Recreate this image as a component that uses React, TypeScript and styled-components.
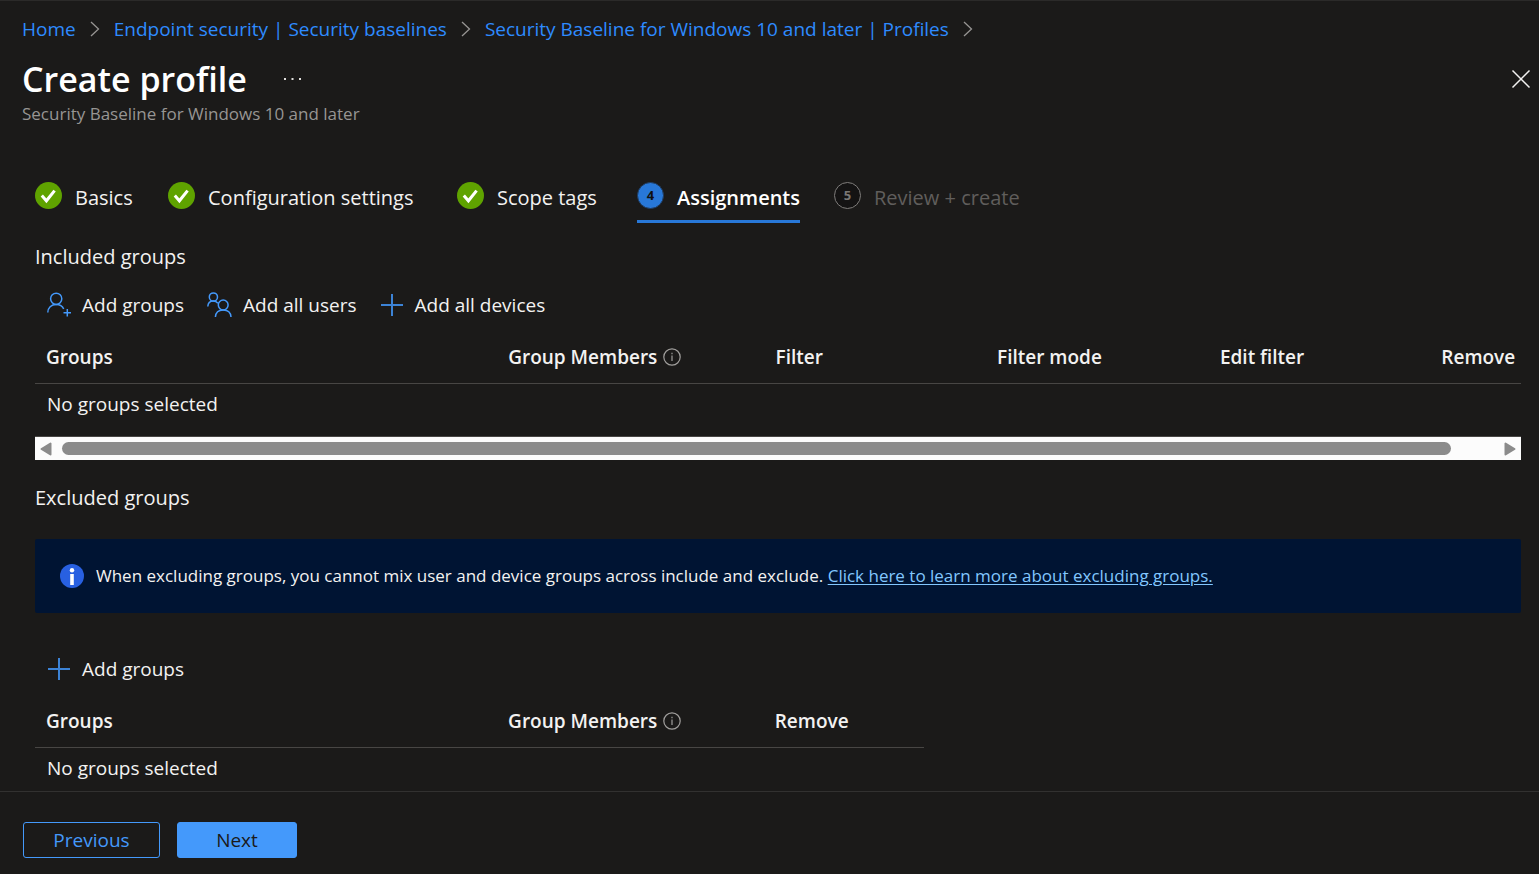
import React from "react";
import styled, { createGlobalStyle } from "styled-components";

const GlobalStyle = createGlobalStyle`
  *, *::before, *::after { box-sizing: border-box; }
  body {
    margin: 0;
    background: #1b1a19;
    color: #f3f2f1;
    font-family: "Open Sans", "Noto Sans", sans-serif;
    font-size: 19px;
    line-height: 28px;
  }
  button { font: inherit; color: inherit; background: none; border: 0; padding: 0; cursor: pointer; }
  h1, h2, p, ol { margin: 0; padding: 0; }
  svg { display: block; flex: none; }
`;

const Page = styled.div`
  min-height: 100vh;
  display: flex;
  flex-direction: column;
  border-top: 1px solid #2b2a29;
`;

const Header = styled.header`
  padding: 14px 8px 0 22px;
`;

const Breadcrumb = styled.nav`
  display: flex;
  align-items: center;
  gap: 14px;
  white-space: nowrap;
`;

const Crumb = styled.a`
  color: #2e8bff;
  text-decoration: none;
`;

const TitleRow = styled.div`
  display: flex;
  align-items: center;
  height: 44px;
  margin-top: 14px;
`;

const Title = styled.h1`
  color: #ffffff;
  font-size: 34px;
  line-height: 44px;
  font-weight: 600;
`;

const MoreButton = styled.button`
  margin-left: 37px;
`;

const CloseButton = styled.button`
  margin-left: auto;
`;

const Subtitle = styled.p`
  color: #979593;
  font-size: 17px;
  line-height: 26px;
`;

const Main = styled.main`
  padding: 55px 18px 0 35px;
`;

const Steps = styled.ol`
  display: grid;
  grid-template-columns: 133px 289px 180px 197px auto;
  list-style: none;
  justify-content: start;
  white-space: nowrap;
`;

const StepButton = styled.button<{ $state: "done" | "current" | "pending" }>`
  display: flex;
  align-items: flex-start;
  gap: 13px;
  height: 41px;
  border-bottom: 3px solid ${(p) => (p.$state === "current" ? "#2878d8" : "transparent")};
  color: ${(p) => (p.$state === "current" ? "#ffffff" : p.$state === "pending" ? "#605e5c" : "#f3f2f1")};
  font-size: 20px;
  font-weight: ${(p) => (p.$state === "current" ? 600 : 400)};
  line-height: 32px;
`;

const StepNumber = styled.span<{ $current?: boolean }>`
  width: 27px;
  height: 27px;
  border-radius: 50%;
  border: 1px solid ${(p) => (p.$current ? "#1f3b5e" : "#7f7d7b")};
  background: ${(p) => (p.$current ? "#2878d8" : "#141313")};
  color: ${(p) => (p.$current ? "#11100f" : "#797775")};
  font-size: 13px;
  font-weight: 700;
  line-height: 25px;
  text-align: center;
`;

const SectionTitle = styled.h2`
  font-size: 20px;
  font-weight: 400;
  line-height: 28px;
`;

const IncludedSection = styled.section`
  margin-top: 20px;
`;

const ExcludedSection = styled.section`
  margin-top: 24px;
`;

const Toolbar = styled.div`
  display: flex;
  gap: 23px;
  padding-left: 12px;
  margin: 18px 0 10px;
`;

const ToolButton = styled.button`
  display: flex;
  align-items: center;
  gap: 11px;
  height: 32px;
`;

const Table = styled.table<{ $width: string }>`
  width: ${(p) => p.$width};
  table-layout: fixed;
  border-collapse: separate;
  border-spacing: 0;
  white-space: nowrap;
`;

const HeadCell = styled.th<{ $width: string }>`
  width: ${(p) => p.$width};
  height: 53px;
  padding: 0 0 0 11px;
  border-bottom: 1px solid #484644;
  text-align: left;
  font-weight: 600;
`;

const HeadLabel = styled.span`
  display: flex;
  align-items: center;
  gap: 6px;
`;

const Cell = styled.td`
  height: 40px;
  padding: 0 0 0 12px;
`;

const ScrollTrack = styled.div`
  display: flex;
  align-items: center;
  justify-content: space-between;
  height: 24px;
  margin-top: 12px;
  padding: 0 5px;
  border-top: 1px solid #484644;
  background: #fcfcfc;
`;

const ScrollRail = styled.div`
  flex: 1;
  margin: 0 10px;
`;

const ScrollThumb = styled.div`
  width: 97%;
  height: 13px;
  border-radius: 7px;
  background: #8b8b8b;
`;

const InfoBox = styled.div`
  display: flex;
  align-items: center;
  gap: 12px;
  height: 74px;
  margin: 27px 0 40px;
  padding: 0 25px;
  border-radius: 2px;
  background: #001433;
  color: #f3f2f1;
  font-size: 17px;
`;

const InfoLink = styled.a`
  color: #82c7ff;
  text-underline-offset: 2px;
`;

const Footer = styled.footer`
  display: flex;
  gap: 17px;
  margin-top: auto;
  padding: 30px 23px 16px;
  border-top: 1px solid #323130;
`;

const ActionButton = styled.button<{ $primary?: boolean }>`
  width: ${(p) => (p.$primary ? 120 : 137)}px;
  height: 36px;
  border: 1px solid #4499fb;
  border-radius: 3px;
  background: ${(p) => (p.$primary ? "#4499fb" : "transparent")};
  color: ${(p) => (p.$primary ? "#1b1a19" : "#4499fb")};
  font-weight: 500;
  line-height: 32px;
`;

const Chevron = () => (
  <svg width="10" height="16" viewBox="0 0 10 16" fill="none" stroke="#979593" strokeWidth="1.3" aria-hidden="true">
    <path d="M1 1l7.5 7L1 15" />
  </svg>
);

const CheckIcon = () => (
  <svg width="27" height="27" viewBox="0 0 27 27" aria-hidden="true">
    <circle cx="13.5" cy="13.5" r="13.5" fill="#5fa300" />
    <path d="M6.8 13.6l4.6 5.2L19.6 8.6" fill="none" stroke="#fff" strokeWidth="3" />
  </svg>
);

const AddUserIcon = () => (
  <svg width="24" height="26" viewBox="0 0 24 26" fill="none" stroke="#4499fb" strokeWidth="1.5" aria-hidden="true">
    <circle cx="9.2" cy="6.8" r="5.6" />
    <path d="M.8 20.5c0-4.800 3.400-8 8.400-8 3.800 0 6.300 1.700 7.500 4.500" />
    <path d="M20.300 17v7.500M16.500 20.800H24" />
  </svg>
);

const UsersIcon = () => (
  <svg width="25" height="26" viewBox="0 0 25 26" fill="none" stroke="#4499fb" strokeWidth="1.5" aria-hidden="true">
    <circle cx="6.400" cy="5" r="4.100" />
    <path d="M.8 14.500c.2-3.400 2.300-5.400 5.400-5.400 2 0 3.600.8 4.700 2.100" />
    <circle cx="16.200" cy="13" r="4.900" />
    <path d="M8.400 25c.3-4.500 3.400-7.100 7.800-7.100s7.500 2.600 7.800 7.100" />
  </svg>
);

const PlusIcon = () => (
  <svg width="24" height="24" viewBox="0 0 24 24" fill="none" stroke="#3c83d6" strokeWidth="2" aria-hidden="true">
    <path d="M12 1v22M1 12h22" />
  </svg>
);

const HintIcon = () => (
  <svg width="18" height="18" viewBox="0 0 18 18" fill="none" stroke="#a19f9d" strokeWidth="1.200" aria-hidden="true">
    <circle cx="9" cy="9" r="8.200" />
    <path d="M9 7.500v5.500M9 4.800v1.400" />
  </svg>
);

const InfoIcon = () => (
  <svg width="24" height="24" viewBox="0 0 24 24" aria-hidden="true">
    <circle cx="12" cy="12" r="12" fill="#2860e1" />
    <circle cx="12" cy="6.200" r="2.200" fill="#fff" />
    <path d="M10.200 10h3.600v11h-3.600z" fill="#fff" />
  </svg>
);

const MoreIcon = () => (
  <svg width="17" height="4" viewBox="0 0 17 4" fill="#e1dfdd" aria-hidden="true">
    <path d="M0 1h2v2H0zM7.500 1h2v2h-2zM15 1h2v2h-2z" />
  </svg>
);

const CloseIcon = () => (
  <svg width="20" height="20" viewBox="0 0 20 20" stroke="#f3f2f1" strokeWidth="1.500" aria-hidden="true">
    <path d="M1.500 1.500l17 17M18.500 1.500l-17 17" />
  </svg>
);

const ArrowIcon = ({ right = false }: { right?: boolean }) => (
  <svg width="12" height="14" viewBox="0 0 12 14" fill="#8b8b8b" stroke="#8b8b8b" strokeWidth="2" strokeLinejoin="round" aria-hidden="true">
    <path d={right ? "M1.500 1.500v11L10.500 7z" : "M10.500 1.500v11L1.500 7z"} />
  </svg>
);

const crumbs = [
  "Home",
  "Endpoint security | Security baselines",
  "Security Baseline for Windows 10 and later | Profiles",
];

const steps = [
  { label: "Basics", state: "done" },
  { label: "Configuration settings", state: "done" },
  { label: "Scope tags", state: "done" },
  { label: "Assignments", state: "current" },
  { label: "Review + create", state: "pending" },
] as const;

type Column = { label: string; width: string; hint?: boolean };

const includedColumns: Column[] = [
  { label: "Groups", width: "31.1%" },
  { label: "Group Members", width: "18%", hint: true },
  { label: "Filter", width: "14.9%" },
  { label: "Filter mode", width: "15%" },
  { label: "Edit filter", width: "14.9%" },
  { label: "Remove", width: "6.1%" },
];

const excludedColumns: Column[] = [
  { label: "Groups", width: "52%" },
  { label: "Group Members", width: "30%", hint: true },
  { label: "Remove", width: "18%" },
];

const GroupsTable = ({ columns, width }: { columns: Column[]; width: string }) => (
  <Table $width={width}>
    <thead>
      <tr>
        {columns.map((c) => (
          <HeadCell key={c.label} $width={c.width} scope="col">
            <HeadLabel>
              {c.label}
              {c.hint && <HintIcon />}
            </HeadLabel>
          </HeadCell>
        ))}
      </tr>
    </thead>
    <tbody>
      <tr>
        <Cell colSpan={columns.length}>No groups selected</Cell>
      </tr>
    </tbody>
  </Table>
);

export default function App() {
  return (
    <Page>
      <GlobalStyle />
      <Header>
        <Breadcrumb aria-label="Breadcrumb">
          {crumbs.map((c) => (
            <React.Fragment key={c}>
              <Crumb href="#">{c}</Crumb>
              <Chevron />
            </React.Fragment>
          ))}
        </Breadcrumb>
        <TitleRow>
          <Title>Create profile</Title>
          <MoreButton aria-label="More actions">
            <MoreIcon />
          </MoreButton>
          <CloseButton aria-label="Close">
            <CloseIcon />
          </CloseButton>
        </TitleRow>
        <Subtitle>Security Baseline for Windows 10 and later</Subtitle>
      </Header>

      <Main>
        <Steps>
          {steps.map((s, i) => (
            <li key={s.label}>
              <StepButton $state={s.state} aria-current={s.state === "current" ? "step" : undefined}>
                {s.state === "done" ? (
                  <CheckIcon />
                ) : (
                  <StepNumber $current={s.state === "current"}>{i + 1}</StepNumber>
                )}
                {s.label}
              </StepButton>
            </li>
          ))}
        </Steps>

        <IncludedSection>
          <SectionTitle>Included groups</SectionTitle>
          <Toolbar>
            <ToolButton>
              <AddUserIcon />
              Add groups
            </ToolButton>
            <ToolButton>
              <UsersIcon />
              Add all users
            </ToolButton>
            <ToolButton>
              <PlusIcon />
              Add all devices
            </ToolButton>
          </Toolbar>
          <GroupsTable columns={includedColumns} width="100%" />
          <ScrollTrack>
            <button aria-label="Scroll left">
              <ArrowIcon />
            </button>
            <ScrollRail>
              <ScrollThumb />
            </ScrollRail>
            <button aria-label="Scroll right">
              <ArrowIcon right />
            </button>
          </ScrollTrack>
        </IncludedSection>

        <ExcludedSection>
          <SectionTitle>Excluded groups</SectionTitle>
          <InfoBox>
            <InfoIcon />
            <p>
              When excluding groups, you cannot mix user and device groups across include and exclude.{" "}
              <InfoLink href="#">Click here to learn more about excluding groups.</InfoLink>
            </p>
          </InfoBox>
          <Toolbar>
            <ToolButton>
              <PlusIcon />
              Add groups
            </ToolButton>
          </Toolbar>
          <GroupsTable columns={excludedColumns} width="59.8%" />
        </ExcludedSection>
      </Main>

      <Footer>
        <ActionButton>Previous</ActionButton>
        <ActionButton $primary>Next</ActionButton>
      </Footer>
    </Page>
  );
}
